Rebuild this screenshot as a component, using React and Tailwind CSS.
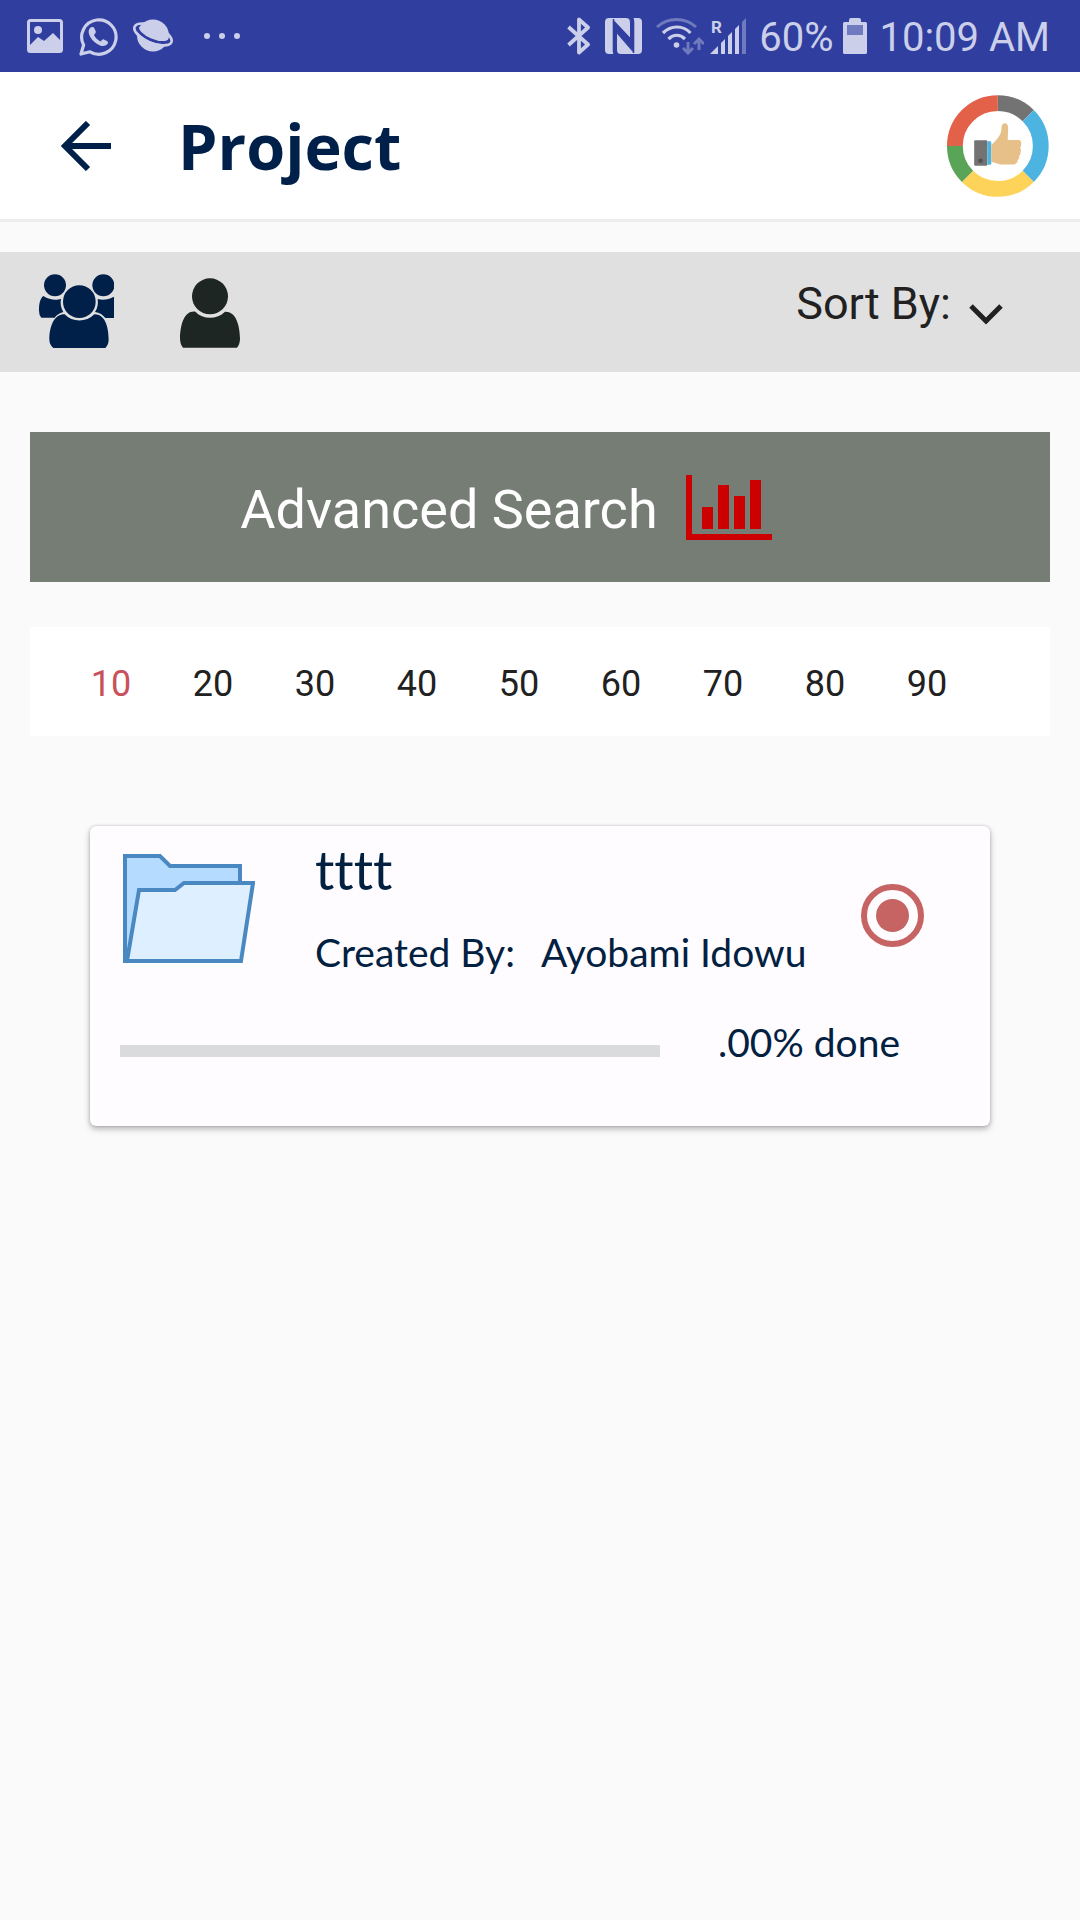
import React from "react";

const pages = [10, 20, 30, 40, 50, 60, 70, 80, 90];

function GalleryIcon() {
  return (
    <svg width="36" height="34" viewBox="0 0 36 34" fill="none" aria-hidden="true">
      <rect x="1.5" y="1.5" width="33" height="31" rx="2" stroke="#cbcfea" strokeWidth="3" />
      <circle cx="11" cy="11" r="4" fill="#cbcfea" />
      <path d="M3 26 L11 18 L17 22 L26 14 L34 22 V32 H3Z" fill="#cbcfea" />
    </svg>
  );
}

function WhatsAppIcon() {
  return (
    <svg width="39" height="39" viewBox="0 0 39 39" fill="none" aria-hidden="true">
      <path
        d="M2 37 L4.6 28 A17.2 17.2 0 1 1 11 34.8 Z"
        stroke="#cbcfea"
        strokeWidth="3.2"
        strokeLinejoin="round"
      />
      <path
        d="M11.6 10.6 C13 9.6 14.8 10 15.4 11.4 L16.8 14.6 C17.2 15.8 16 16.8 15 18 C16.2 20.8 18.8 23.2 21.6 24.4 C22.6 23.4 23.6 22 24.8 22.4 L28.4 24.2 C29.4 24.8 29 26.6 28 27.6 C26.4 29.2 23.8 29.4 21 28.4 C16.2 26.6 11.8 22.2 10 17 C9.2 14.4 9.8 11.8 11.6 10.6Z"
        fill="#cbcfea"
      />
    </svg>
  );
}

function PlanetIcon() {
  return (
    <svg width="42" height="34" viewBox="0 0 42 34" fill="none" aria-hidden="true">
      <circle cx="21" cy="16.5" r="16" fill="#cbcfea" />
      <g transform="rotate(23 21 15.5)">
        <path d="M3.5 13 C3.500 24 38.500 24 38.500 13" stroke="#303f9f" strokeWidth="3" />
        <ellipse cx="21" cy="15.5" rx="20" ry="8.5" stroke="#cbcfea" strokeWidth="2.600" />
      </g>
    </svg>
  );
}

function BluetoothIcon() {
  return (
    <svg width="24" height="38" viewBox="0 0 24 38" fill="none" aria-hidden="true">
      <path d="M1.500 10 L21 27.500 L12 35.500 V2.500 L21 10.500 L1.500 28" stroke="#cbcfea" strokeWidth="3.8" strokeLinejoin="round" />
    </svg>
  );
}

function NfcIcon() {
  return (
    <svg width="37" height="36" viewBox="0 0 37 36" fill="none" aria-hidden="true">
      <path d="M4 0 H21 C25 0 25 3 25 6 V20 L8.500 3 V36 H4 Q0 36 0 32 V4 Q0 0 4 0Z" fill="#cbcfea" />
      <path d="M33 36 H16 C12 36 12 33 12 30 V14 L28.500 33 V0 H33 Q37 0 37 4 V32 Q37 36 33 36Z" fill="#cbcfea" />
      <path d="M8.500 1 V33 Q8.500 36 11 36 M28.500 35 V4 Q28.500 0 26 0 M12 14.500 L28 33 M8.500 3 L25 20.500" stroke="#303f9f" strokeWidth="1.600" />
    </svg>
  );
}

function WifiIcon() {
  return (
    <svg width="48" height="37" viewBox="0 0 48 37" fill="none" aria-hidden="true">
      <path d="M1 9 C12 -1 29 -1 40 9" stroke="#6f7abf" strokeWidth="3" />
      <path d="M7 15 C15 7 27 7 34.500 15" stroke="#cbcfea" strokeWidth="3.200" />
      <path d="M12.500 21 C17.500 16 24 16 29 21" stroke="#cbcfea" strokeWidth="3.200" />
      <circle cx="20.500" cy="27" r="2.800" fill="#cbcfea" />
      <path d="M32 24 V34 M27 30 L32 35 L37 30 M43 32 V21 M38 26 L43 21 L48 26" stroke="#6f7abf" strokeWidth="3" />
    </svg>
  );
}

function SignalIcon() {
  return (
    <svg width="37" height="36" viewBox="0 0 37 36" aria-hidden="true">
      <text x="1" y="15" fontFamily="Roboto, sans-serif" fontWeight="700" fontSize="17" fill="#cbcfea">
        R
      </text>
      <path d="M0 36 L8 28 V36Z M11 25 L15 21 V36 H11Z M18 18 L22 14 V36 H18Z M25 11 L29 7 V36 H25Z" fill="#cbcfea" />
      <path d="M32 4 L36 0 V36 H32Z" fill="#6f7abf" />
    </svg>
  );
}

function BatteryIcon() {
  return (
    <svg width="24" height="36" viewBox="0 0 24 36" aria-hidden="true">
      <path d="M6 4 V2 Q6 0 8 0 H16 Q18 0 18 2 V4 H22.500 Q24 4 24 5.500 V34.500 Q24 36 22.500 36 H1.500 Q0 36 0 34.500 V5.500 Q0 4 1.500 4Z" fill="#cbcfea" />
      <rect x="4" y="7" width="16" height="10" fill="#6f7abf" />
    </svg>
  );
}

function StatusBar() {
  return (
    <div className="flex items-center justify-between bg-[#303f9f] pr-[30px] pl-[27px] font-[Roboto,sans-serif] text-[40px] leading-[68px] text-[#cbcfea]">
      <div className="flex items-center">
        <GalleryIcon />
        <span className="ml-4"><WhatsAppIcon /></span>
        <span className="ml-3.5"><PlanetIcon /></span>
        <span className="ml-[30px] flex gap-[9px]">
          <span className="size-1.5 rounded-full bg-[#cbcfea]" />
          <span className="size-1.5 rounded-full bg-[#cbcfea]" />
          <span className="size-1.5 rounded-full bg-[#cbcfea]" />
        </span>
      </div>
      <div className="flex items-center">
        <BluetoothIcon />
        <span className="ml-3.5"><NfcIcon /></span>
        <span className="ml-3.5"><WifiIcon /></span>
        <span className="ml-1.5"><SignalIcon /></span>
        <span className="ml-3 pt-1">60%</span>
        <span className="ml-2.5"><BatteryIcon /></span>
        <span className="ml-3 pt-1">10:09 AM</span>
      </div>
    </div>
  );
}

function BackIcon() {
  return (
    <svg width="50" height="50" viewBox="0 0 50 50" fill="none" stroke="#00204a" strokeWidth="6" aria-hidden="true">
      <path d="M50 25 H5 M27 2 L4 25 L27 48" />
    </svg>
  );
}

function ThumbLogo() {
  return (
    <svg width="102" height="102" viewBox="81 47 304 304" fill="none" aria-hidden="true">
      <g strokeWidth="47">
        <path d="M232.500 71 A128 128 0 0 1 323 108.500" stroke="#737373" />
        <path d="M323 108.500 A128 128 0 0 1 323 289.500" stroke="#4db3e1" />
        <path d="M323 289.500 A128 128 0 0 1 142 289.500" stroke="#fed35a" />
        <path d="M142 289.500 A128 128 0 0 1 104.500 199" stroke="#5aa457" />
        <path d="M104.500 199 A128 128 0 0 1 232.500 71" stroke="#e36149" />
      </g>
      <rect x="162" y="182" width="39" height="76" rx="3" fill="#737373" />
      <circle cx="181" cy="243" r="7" fill="#515151" />
      <path d="M201 185 H209 Q213 185 213 189 V251 Q213 255 209 255 H201Z" fill="#4db3e1" />
      <path
        d="M213 196 C226 184 241 169 243 152 C244 145 242 132 253 131 C262 131 264 140 263 152 L262 181 H296 Q303 183 302 191 Q303 199 299 204 Q303 211 300 217 Q301 225 296 229 Q298 236 292 240 Q292 253 279 254 H243 C231 254 224 248 213 246Z"
        fill="#e7bf89"
      />
    </svg>
  );
}

function GroupIcon() {
  return (
    <svg width="75" height="74" viewBox="117 102 225 222" aria-hidden="true">
      <g fill="#00204a">
        <circle cx="165" cy="136" r="33" />
        <circle cx="310" cy="136" r="33" />
        <path d="M130 168 C149 181 171 181 183 176 C180 190 183 205 190 216 C178 219 170 225 164 233 H124 Q117 226 117 212 C117 193 120 175 130 168Z" />
        <path d="M293 177 C311 182 326 178 342 170 V234 H316 C310 225 298 218 285 216 C293 204 295 191 293 177Z" />
        <circle cx="238" cy="185" r="49" />
        <path d="M194 223 C217 248 259 248 283 223 C312 222 326 255 326 298 Q326 315 316 324 H160 Q148 315 148 298 C149 252 166 222 194 223Z" />
      </g>
    </svg>
  );
}

function PersonIcon() {
  return (
    <svg width="60" height="70" viewBox="540 116 180 208" aria-hidden="true">
      <g fill="#1d2622">
        <circle cx="630" cy="170" r="54" />
        <path d="M586 216 C609 240 651 240 675 216 C704 214 719 248 720 296 Q720 314 711 324 H549 Q540 314 540 296 C541 246 557 212 586 216Z" />
      </g>
    </svg>
  );
}

function ChartIcon() {
  return (
    <svg width="86" height="65" viewBox="0 0 86 65" fill="#cc0000" aria-hidden="true">
      <path d="M0 0 H6 V59 H86 V65 H0Z" />
      <path d="M16 32 H27 V54 H16Z M32 10 H43 V54 H32Z M48 21 H59 V54 H48Z M64 5 H75 V54 H64Z" />
    </svg>
  );
}

function FolderIcon() {
  return (
    <svg width="135" height="109" viewBox="-3 0 135 109" stroke="#4a88c2" strokeWidth="4" aria-hidden="true">
      <path d="M2 107 V2 H37 L47 12 H117 V107Z" fill="#b5dcff" />
      <path d="M4 107 L16 36 H52 L61 29 H130 L118 107Z" fill="#def0ff" />
    </svg>
  );
}

function ProjectCard() {
  return (
    <article className="mx-[90px] mt-[90px] rounded-md bg-[#fefcff] pt-3.5 pb-[60px] pl-[30px] font-[Lato,sans-serif] text-[#02203f] shadow-[0_3px_6px_rgba(0,0,0,0.28),0_0_3px_rgba(0,0,0,0.18)]">
      <div className="flex items-start pr-[66px]">
        <span className="mt-3.5 shrink-0"><FolderIcon /></span>
        <div className="ml-[60px] min-w-0 flex-1">
          <h2 className="text-[54px] leading-[60px] [font-variant-ligatures:none]">tttt</h2>
          <p className="mt-[22px] flex gap-[26px] text-[39px] leading-[60px] whitespace-nowrap">
            <span>Created By:</span>
            <span>Ayobami Idowu</span>
          </p>
        </div>
        <input
          type="radio"
          defaultChecked
          aria-label="Select project tttt"
          className="mt-2 size-[63px] shrink-0 appearance-none self-center rounded-full border-[6px] border-[#c66464] bg-[#c66464] bg-clip-content p-[9px]"
        />
      </div>
      <div className="mt-9 flex items-end">
        <div
          role="progressbar"
          aria-label="Project progress"
          aria-valuenow={0}
          aria-valuemin={0}
          aria-valuemax={100}
          className="mb-[9px] h-3 w-[540px] min-w-0 bg-[#dadbdc]"
        />
        <span className="ml-[58px] text-[39px] leading-[48px] whitespace-nowrap">.00% done</span>
      </div>
    </article>
  );
}

export default function App() {
  return (
    <div className="min-h-screen bg-[#fafafa] font-[Roboto,sans-serif] text-[#212121]">
      <StatusBar />
      <header className="flex items-center border-b-[3px] border-[#ededed] bg-white pt-[23px] pr-[31px] pb-[22px] pl-[61px]">
        <button type="button" aria-label="Back">
          <BackIcon />
        </button>
        <h1 className="ml-[67px] flex-1 font-['Open_Sans',sans-serif] text-[63px] leading-[80px] font-bold text-[#00204a]">
          Project
        </h1>
        <button type="button" aria-label="Feedback">
          <ThumbLogo />
        </button>
      </header>

      <div className="mt-[30px] flex items-end bg-[#e0e0e0] pt-[22px] pr-[77px] pb-6 pl-[39px]">
        <button type="button" aria-label="Group projects">
          <GroupIcon />
        </button>
        <button type="button" aria-label="My projects" className="ml-[66px]">
          <PersonIcon />
        </button>
        <button type="button" aria-haspopup="listbox" className="ml-auto flex items-end self-start text-[45px] leading-[60px]">
          Sort By:
          <svg width="34" height="40" viewBox="0 0 34 40" className="ml-[18px]" fill="none" stroke="#212121" strokeWidth="5" aria-hidden="true">
            <path d="M2 12 L17 27 L32 12" />
          </svg>
        </button>
      </div>

      <button
        type="button"
        className="mx-[30px] mt-[60px] flex w-[calc(100%-60px)] items-center justify-center gap-7 bg-[#767d75] py-8 pr-[68px] text-[54px] leading-[80px] text-white"
      >
        <span className="pt-1.5">Advanced Search</span>
        <ChartIcon />
      </button>

      <nav aria-label="Pages" className="mx-[30px] mt-[45px] flex bg-white px-[30px] pt-[27px] pb-[22px]">
        {pages.map((page) => (
          <button
            key={page}
            type="button"
            className={
              page === 10
                ? "w-[102px] text-[36px] leading-[60px] text-[#c8515b]"
                : "w-[102px] text-[36px] leading-[60px]"
            }
          >
            {page}
          </button>
        ))}
      </nav>

      <ProjectCard />
    </div>
  );
}
